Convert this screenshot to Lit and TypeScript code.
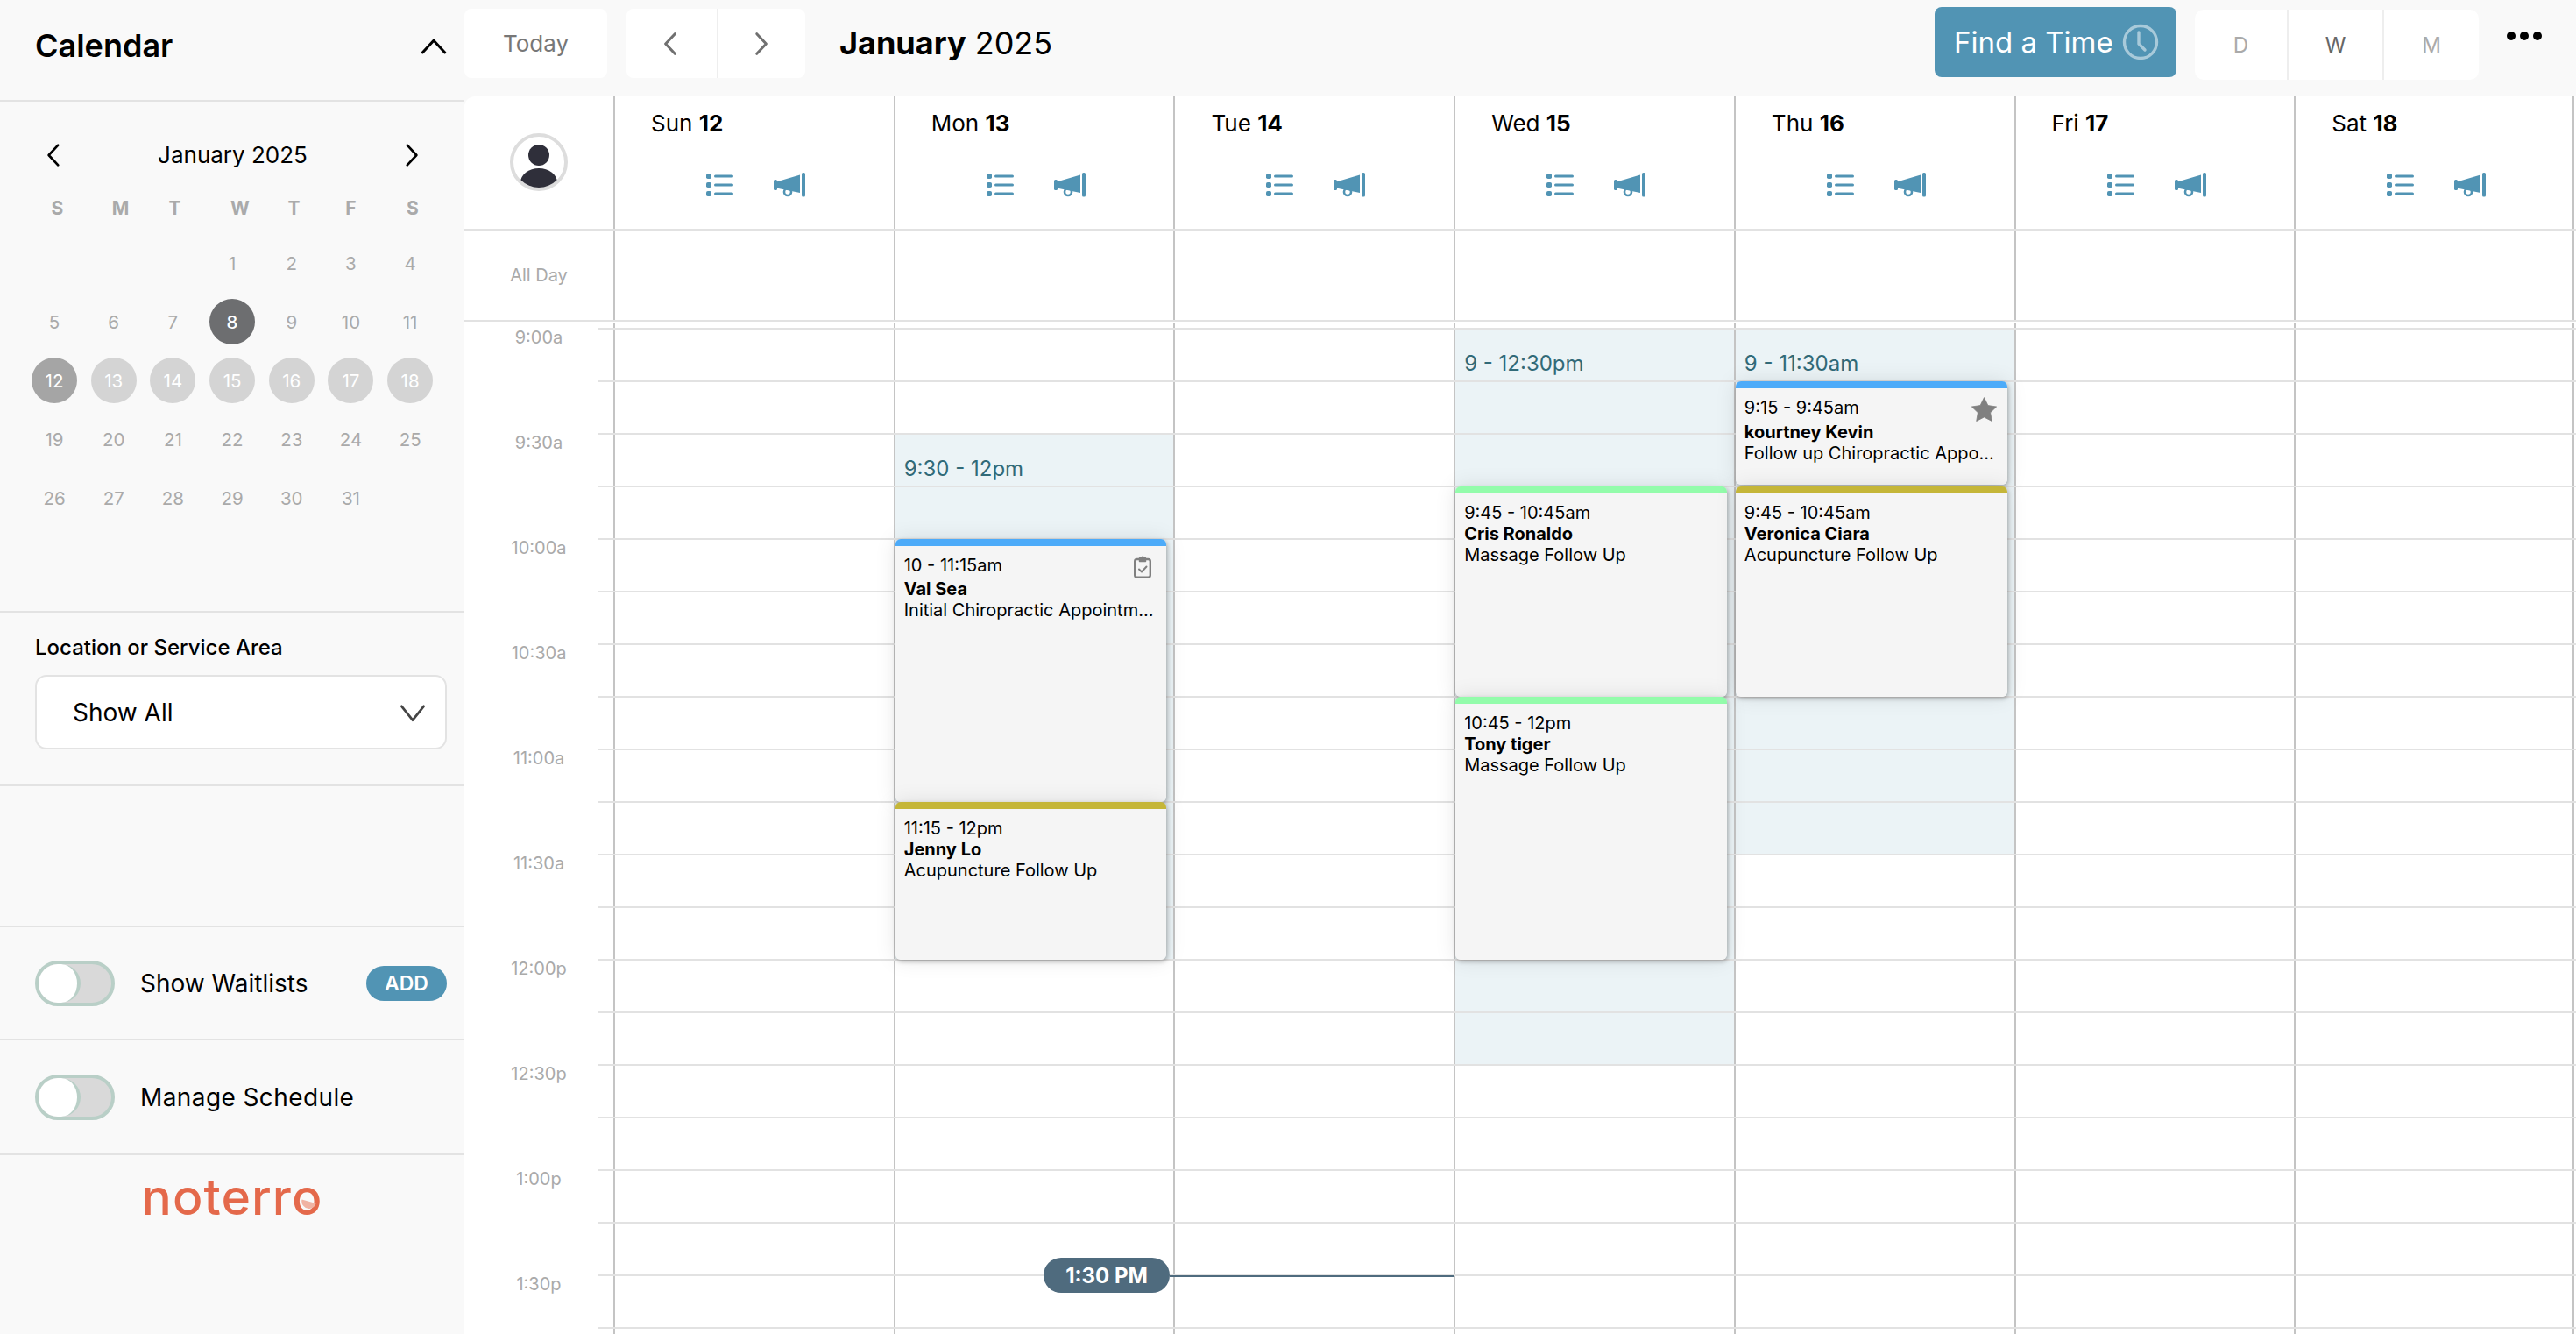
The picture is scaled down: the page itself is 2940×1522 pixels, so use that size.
import { LitElement, html, css } from "lit";
import { customElement } from "lit/decorators.js";

type Ev = { start: number; end: number; time: string; name: string; desc: string; color: string; icon?: "clip" | "star" };
type Day = { label: string; num: number; block?: { start: number; end: number; text: string }; events: Ev[] };

const BLUE = "#4dabf9", GOLD = "#c5b638", GREEN = "#93fcab";
const Q = 60; // px per quarter hour

const DAYS: Day[] = [
  { label: "Sun", num: 12, events: [] },
  {
    label: "Mon", num: 13,
    block: { start: 2, end: 12, text: "9:30 - 12pm" },
    events: [
      { start: 4, end: 9, time: "10 - 11:15am", name: "Val Sea", desc: "Initial Chiropractic Appointm...", color: BLUE, icon: "clip" },
      { start: 9, end: 12, time: "11:15 - 12pm", name: "Jenny Lo", desc: "Acupuncture Follow Up", color: GOLD },
    ],
  },
  { label: "Tue", num: 14, events: [] },
  {
    label: "Wed", num: 15,
    block: { start: 0, end: 14, text: "9 - 12:30pm" },
    events: [
      { start: 3, end: 7, time: "9:45 - 10:45am", name: "Cris Ronaldo", desc: "Massage Follow Up", color: GREEN },
      { start: 7, end: 12, time: "10:45 - 12pm", name: "Tony tiger", desc: "Massage Follow Up", color: GREEN },
    ],
  },
  {
    label: "Thu", num: 16,
    block: { start: 0, end: 10, text: "9 - 11:30am" },
    events: [
      { start: 1, end: 3, time: "9:15 - 9:45am", name: "kourtney Kevin", desc: "Follow up Chiropractic Appo...", color: BLUE, icon: "star" },
      { start: 3, end: 7, time: "9:45 - 10:45am", name: "Veronica Ciara", desc: "Acupuncture Follow Up", color: GOLD },
    ],
  },
  { label: "Fri", num: 17, events: [] },
  { label: "Sat", num: 18, events: [] },
];

const TIMES = ["9:00a", "9:30a", "10:00a", "10:30a", "11:00a", "11:30a", "12:00p", "12:30p", "1:00p", "1:30p"];
const WEEK = ["S", "M", "T", "W", "T", "F", "S"];
const MONTH: (number | null)[] = [null, null, null, ...Array.from({ length: 31 }, (_, i) => i + 1)];

const chevron = (d: string, cls: string) => html`<svg class=${cls} viewBox="0 0 24 24" fill="none" stroke="currentColor" stroke-linecap="round" stroke-linejoin="round"><path d=${d}/></svg>`;
const LEFT = "M15.7 4 8.2 12l7.5 8";
const RIGHT = "M8.3 4l7.5 8-7.5 8";

const listIcon = html`<svg class="ic-list" viewBox="0 0 31 26" fill="#5194b4">
  <rect x="0" y="0" width="6" height="6" rx="1.8"/><rect x="0" y="10" width="6" height="6" rx="1.8"/><rect x="0" y="20" width="6" height="6" rx="1.8"/>
  <rect x="9" y="1.5" width="22" height="3" rx="1.5"/><rect x="9" y="11.5" width="22" height="3" rx="1.5"/><rect x="9" y="21.5" width="22" height="3" rx="1.5"/>
</svg>`;
const megaIcon = html`<svg class="ic-mega" viewBox="0 0 36 28" fill="#5194b4">
  <rect x="0" y="8" width="4" height="12" rx="1.5"/>
  <path d="M3 10.5 30 2.5V23L3 17.5z"/>
  <circle cx="16" cy="22" r="4" fill="none" stroke="#5194b4" stroke-width="2.6"/>
  <rect x="32" y="0" width="4" height="27.5" rx="1.6"/>
</svg>`;
const clipIcon = html`<svg class="ev-ic clip" viewBox="0 0 20 26" fill="none" stroke="#808080" stroke-width="2.4" stroke-linejoin="round" stroke-linecap="round">
  <rect x="1.2" y="4" width="17.6" height="20.8" rx="2.5"/>
  <path d="M6.5 4V2.8h2a1.5 1.5 0 0 1 3 0h2V6.6h-7z" fill="#808080" stroke-width="1.4"/>
  <path d="M6 15.5l3 3 5.5-6" stroke-width="2"/>
</svg>`;
const starIcon = html`<svg class="ev-ic star" viewBox="0 0 29 28" fill="#808080"><path d="M14.5 0.6 18.9 9.6 28.6 11 21.6 17.8 23.3 27.5 14.5 22.9 5.7 27.5 7.4 17.8 0.4 11 10.1 9.6z" stroke="#808080" stroke-linejoin="round" stroke-width="0.8"/></svg>`;

@customElement("app-root")
export class AppRoot extends LitElement {
  static styles = css`
    :host { display: flex; width: 2940px; height: 1522px; overflow: hidden; background: #f9f9f9; font-family: Inter, "Liberation Sans", sans-serif; color: #000; }
    * { box-sizing: border-box; }
    svg { display: block; flex: none; }

    /* sidebar */
    .side { width: 530px; flex: none; display: flex; flex-direction: column; }
    .sec { border-bottom: 2px solid #e3e3e3; flex: none; }
    .s-head { height: 116px; display: flex; align-items: center; justify-content: space-between; padding: 0 17px 10px 40px; }
    .s-head h1 { margin: 0; font-size: 36px; font-weight: 600; line-height: 44px; }
    .up { width: 36px; height: 36px; stroke-width: 2; color: #000; margin-top: 4px; }
    .s-cal { height: 583px; padding: 44px 0 0 28px; }
    .m-head { display: flex; align-items: center; justify-content: space-between; width: 443px; height: 34px; margin-left: 16px; }
    .m-head span { font-size: 26px; line-height: 34px; }
    .m-chev { width: 34px; height: 34px; stroke-width: 1.9; }
    .wk { display: grid; grid-template-columns: 75px 69px 55px 94px 29px 101px 40px; margin: 29px 0 0 0; height: 30px; }
    .wk span { text-align: center; font-size: 21px; line-height: 30px; font-weight: 700; color: #aaa; }
    .dgrid { display: grid; grid-template-columns: repeat(7, 52px); column-gap: 15.7px; row-gap: 15px; margin: 21px 0 0 8px; }
    .dgrid span { width: 52px; height: 52px; display: flex; align-items: center; justify-content: center; font-size: 20.5px; color: #aaa; border-radius: 50%; }
    .dgrid .cur { background: #6d6e70; color: #fff; font-weight: 500; }
    .dgrid .sel { background: #a5a5a5; color: #fff; }
    .dgrid .wkd { background: #d4d4d4; color: #fff; }
    .s-loc { height: 198px; padding: 25px 20px 0 40px; }
    .s-loc label { display: block; font-size: 24px; line-height: 30px; font-weight: 500; }
    .select { margin-top: 16px; height: 85px; width: 470px; border: 2px solid #e3e3e3; border-radius: 13px; background: #fff; display: flex; align-items: center; justify-content: space-between; padding: 0 19px 0 41px; font-size: 28px; }
    .down { width: 36px; height: 36px; stroke-width: 1.8; color: #444; }
    .s-gap { height: 161px; }
    .s-tog { display: flex; align-items: center; padding: 0 20px 0 40px; }
    .s-wait { height: 129px; }
    .s-man { height: 131px; }
    .toggle { width: 91px; height: 52px; border: 4px solid #b9cfc7; border-radius: 26px; background: #d9d9d9; flex: none; position: relative; }
    .toggle i { position: absolute; left: 0; top: 0; width: 48px; height: 44px; background: #fff; border-radius: 22px; border-right: 4px solid #b9cfc7; }
    .s-tog b { font-weight: 400; font-size: 28px; margin-left: 29px; flex: 1; white-space: nowrap; }
    .s-man b { letter-spacing: 0.4px; }
    .add { width: 92px; height: 40px; border-radius: 20px; background: #5194b4; color: #fff; font-size: 23px; font-weight: 600; display: flex; align-items: center; justify-content: center; }
    .logo { display: flex; justify-content: center; padding: 12px 0 0 0; }
    .logo div { position: relative; color: #e4694b; font-size: 57px; line-height: 72px; font-weight: 500; letter-spacing: 1.1px; }
    .logo svg { position: absolute; right: 7px; top: 38px; width: 17px; height: 12px; }

    /* main */
    .main { flex: 1; min-width: 0; display: flex; flex-direction: column; }
    .top { height: 110px; flex: none; display: flex; align-items: flex-start; padding-top: 10px; }
    .btn { height: 79px; background: #fff; border-radius: 8px; display: flex; align-items: center; justify-content: center; }
    .today { width: 163px; font-size: 26px; color: #777; }
    .nav { width: 204px; margin-left: 22px; }
    .nav div { flex: 1; height: 100%; display: flex; align-items: center; justify-content: center; }
    .nav div:first-child { padding-right: 3px; }
    .nav div + div { border-left: 2px solid #eee; }
    .nav svg { width: 34px; height: 34px; stroke-width: 2.1; color: #707070; }
    .title { margin-left: 39px; font-size: 36px; line-height: 79px; white-space: nowrap; }
    .title b { font-weight: 700; }
    .find { margin-left: auto; margin-top: -2px; width: 276px; height: 80px; background: #5194b4; border-radius: 8px; color: #fff; display: flex; align-items: center; padding-left: 22px; font-size: 33px; white-space: nowrap; }
    .find svg { width: 42px; height: 42px; margin-left: 10px; }
    .dwm { margin-left: 21px; margin-top: 1px; width: 324px; height: 80px; background: #fff; border-radius: 10px; display: grid; grid-template-columns: 105px 109px 110px; }
    .dwm span { display: flex; align-items: center; justify-content: center; font-size: 24px; color: #aaa; }
    .dwm span + span { border-left: 2px solid #eee; }
    .dwm .on { color: #666; }
    .more { width: 111px; display: flex; justify-content: center; padding: 26px 7px 0 0; gap: 5px; }
    .more i { width: 10px; height: 10px; border-radius: 50%; background: #000; }

    .panel { flex: 1; min-height: 0; background: #fff; border-top-left-radius: 12px; display: flex; flex-direction: column; overflow: hidden; }
    .row { display: grid; grid-template-columns: 170px repeat(7, 1fr); flex: none; border-bottom: 2px solid #e2e2e2; padding-right: 2px; }
    .r-head { height: 153px; }
    .r-all { height: 104px; }
    .row > div + div { border-left: 2px solid #c4c4c4; }
    .row > div:last-child { border-right: 2px solid #c4c4c4; }
    .gut { display: flex; align-items: center; justify-content: center; }
    .avatar { width: 66px; height: 66px; border: 4px solid #ddd; border-radius: 50%; overflow: hidden; margin-bottom: 2px; }
    .avatar svg { width: 100%; height: 100%; }
    .allday { font-size: 20px; color: #aaa; }
    .dh { padding: 14px 0 0 41px; }
    .dh .lbl { font-size: 26px; line-height: 34px; white-space: nowrap; }
    .dh .lbl b { font-weight: 700; }
    .dh .ics { display: flex; align-items: center; gap: 46px; margin: 39px 0 0 63px; }
    .ic-list { width: 31px; height: 26px; }
    .ic-mega { width: 36px; height: 28px; }

    .body { flex: 1; min-height: 0; position: relative; display: grid; grid-template-columns: 170px repeat(7, 1fr); padding: 2px 2px 0 0; overflow: hidden; }
    .hours { padding-top: 4px; }
    .hours div { height: 120px; font-size: 20px; line-height: 24px; color: #aaa; text-align: center; }
    .col { position: relative; border-left: 2px solid #c4c4c4; }
    .col.last { border-right: 2px solid #c4c4c4; }
    .lines { position: absolute; left: 153px; right: 0; top: 7px; z-index: 1; pointer-events: none; }
    .lines div { height: 60px; border-top: 2px solid #e2e2e2; }
    .block { position: absolute; left: 0; right: 0; background: #ebf3f6; padding: 25px 0 0 10px; font-size: 24px; line-height: 30px; color: #316a78; z-index: 0; }
    .ev { position: absolute; left: 0; right: 8px; z-index: 2; border-radius: 6px; padding: 18px 10px 0 10px; box-shadow: 0 0 24px rgba(0, 0, 0, 0.1), 1px 2px 5px rgba(0, 0, 0, 0.28); font-size: 20px; line-height: 24px; }
    .ev .t { display: flex; justify-content: space-between; align-items: flex-start; white-space: nowrap; }
    .ev .n { font-weight: 700; white-space: nowrap; }
    .ev .d { white-space: nowrap; }
    .clip { width: 20px; height: 26px; margin-right: 7px; margin-top: 1px; }
    .star { width: 29px; height: 28px; margin-right: 2px; }
    .now { position: absolute; z-index: 3; left: 661px; top: 1068px; width: 144px; height: 40px; border-radius: 20px; background: #4f6b7e; color: #fff; font-size: 24px; font-weight: 700; display: flex; align-items: center; justify-content: center; }
    .nowline { position: absolute; z-index: 3; left: 805px; top: 1088px; width: 325px; height: 2px; background: #4f6b7e; }
  `;

  private dayClass(n: number | null) {
    if (n === 8) return "cur";
    if (n === 12) return "sel";
    if (n !== null && n > 12 && n <= 18) return "wkd";
    return "";
  }

  render() {
    return html`
      <aside class="side">
        <div class="sec s-head"><h1>Calendar</h1>${chevron("M3.5 16 12 6.8 20.5 16", "up")}</div>
        <div class="sec s-cal">
          <div class="m-head">
            ${chevron(LEFT, "m-chev")}
            <span>January 2025</span>
            ${chevron(RIGHT, "m-chev")}
          </div>
          <div class="wk">${WEEK.map((w) => html`<span>${w}</span>`)}</div>
          <div class="dgrid">${MONTH.map((n) => html`<span class=${this.dayClass(n)}>${n ?? ""}</span>`)}</div>
        </div>
        <div class="sec s-loc">
          <label>Location or Service Area</label>
          <div class="select"><span>Show All</span>${chevron("M3.6 7.2 12 17.8 20.4 7.2", "down")}</div>
        </div>
        <div class="sec s-gap"></div>
        <div class="sec s-tog s-wait"><div class="toggle"><i></i></div><b>Show Waitlists</b><div class="add">ADD</div></div>
        <div class="sec s-tog s-man"><div class="toggle"><i></i></div><b>Manage Schedule</b></div>
        <div class="logo"><div>noterro<svg viewBox="0 0 17 12"><path d="M0.5 0.5 16.5 5A8 8 0 0 1 2.5 8 8 8 0 0 1 0.5 0.5z" fill="#f0b3a3"/></svg></div></div>
      </aside>

      <main class="main">
        <div class="top">
          <div class="btn today">Today</div>
          <div class="btn nav"><div>${chevron(LEFT, "")}</div><div>${chevron(RIGHT, "")}</div></div>
          <div class="title"><b>January</b> 2025</div>
          <div class="find">Find a Time
            <svg viewBox="0 0 42 42" fill="none" stroke="rgba(255,255,255,.5)" stroke-width="3.4" stroke-linecap="round" stroke-linejoin="round"><circle cx="21" cy="21" r="18.5"/><path d="M19 10v13l7 7"/></svg>
          </div>
          <div class="dwm"><span>D</span><span class="on">W</span><span>M</span></div>
          <div class="more"><i></i><i></i><i></i></div>
        </div>

        <div class="panel">
          <div class="row r-head">
            <div class="gut"><div class="avatar"><svg viewBox="0 0 58 58" fill="#2f2f3a"><circle cx="29" cy="21" r="12"/><ellipse cx="29" cy="52" rx="21" ry="16"/></svg></div></div>
            ${DAYS.map((d) => html`<div class="dh">
              <div class="lbl">${d.label} <b>${d.num}</b></div>
              <div class="ics">${listIcon}${megaIcon}</div>
            </div>`)}
          </div>
          <div class="row r-all">
            <div class="gut allday">All Day</div>
            ${DAYS.map(() => html`<div></div>`)}
          </div>
          <div class="body">
            <div class="hours">${TIMES.map((t) => html`<div>${t}</div>`)}</div>
            ${DAYS.map((d, i) => html`<div class="col ${i === 6 ? "last" : ""}">
              ${d.block ? html`<div class="block" style="top:${d.block.start * Q + 6}px;height:${(d.block.end - d.block.start) * Q}px">${d.block.text}</div>` : ""}
              ${d.events.map((e) => html`<div class="ev" style="top:${e.start * Q + 6}px;height:${(e.end - e.start) * Q - (e.end === 3 && e.start === 1 ? 2 : 0)}px;background:linear-gradient(${e.color} 8px, #f5f5f5 8px)">
                <div class="t"><span>${e.time}</span>${e.icon === "clip" ? clipIcon : e.icon === "star" ? starIcon : ""}</div>
                <div class="n">${e.name}</div>
                <div class="d">${e.desc}</div>
              </div>`)}
            </div>`)}
            <div class="lines">${Array.from({ length: 20 }, () => html`<div></div>`)}</div>
            <div class="now">1:30 PM</div>
            <div class="nowline"></div>
          </div>
        </div>
      </main>
    `;
  }
}
